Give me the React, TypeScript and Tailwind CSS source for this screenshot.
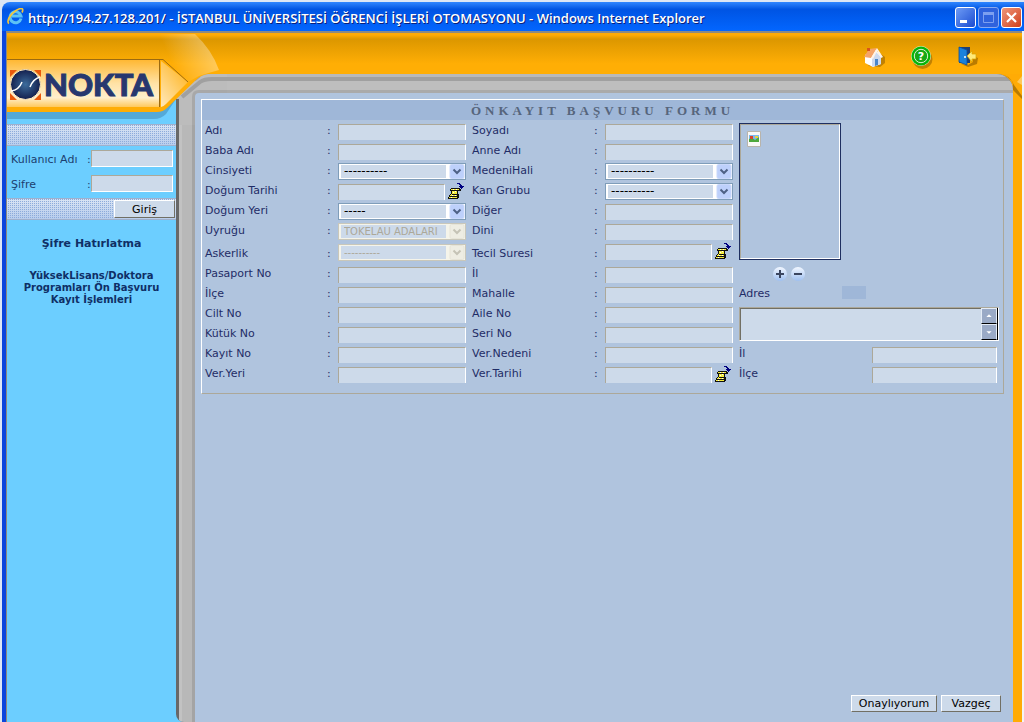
import React, { useId } from "react";

type RowKind = "text" | "select" | "date";

interface Row {
  label: string;
  kind?: RowKind;
  value?: string;
  disabled?: boolean;
  tall?: boolean;
}

const leftRows: Row[] = [
  { label: "Adı" },
  { label: "Baba Adı" },
  { label: "Cinsiyeti", kind: "select", value: "----------" },
  { label: "Doğum Tarihi", kind: "date" },
  { label: "Doğum Yeri", kind: "select", value: "-----" },
  { label: "Uyruğu", kind: "select", value: "TOKELAU ADALARI", disabled: true },
  { label: "Askerlik", kind: "select", value: "----------", disabled: true, tall: true },
  { label: "Pasaport No" },
  { label: "İlçe" },
  { label: "Cilt No" },
  { label: "Kütük No" },
  { label: "Kayıt No" },
  { label: "Ver.Yeri" },
];

const middleRows: Row[] = [
  { label: "Soyadı" },
  { label: "Anne Adı" },
  { label: "MedeniHali", kind: "select", value: "----------" },
  { label: "Kan Grubu", kind: "select", value: "----------" },
  { label: "Diğer" },
  { label: "Dini" },
  { label: "Tecil Suresi", kind: "date", tall: true },
  { label: "İl" },
  { label: "Mahalle" },
  { label: "Aile No" },
  { label: "Seri No" },
  { label: "Ver.Nedeni" },
  { label: "Ver.Tarihi", kind: "date" },
];

const inputClass =
  "block h-4 w-full min-w-0 border-t border-l border-r border-t-[#aca899] border-l-[#aca899] border-r-white bg-[#cddaea] px-1 text-[11px] text-[#1c2f5c] outline-none";
const buttonClass =
  "border border-t-white border-l-white border-r-[#716f64] border-b-[#716f64] bg-[#cddaea] text-center text-[11px] leading-[15px] text-black";

function ScrollIcon() {
  return (
    <svg width="17" height="17" viewBox="0 0 17 17" shapeRendering="crispEdges" aria-hidden="true">
      <path d="M3 5h9v1h1v2h-3v3h1v4h-1v1H0v-2h1v-2h1v-1h1V8H2V6h1z" fill="#111" />
      <path d="M3 6h8v1H3zM4 8h5v3H4v1H3v-1h1zM2 12h7v1H2zM1 14h8v1H1z" fill="#f6ee3c" />
      <path d="M5 6h1v1H5zM8 6h1v1H8zM5 9h1v1H5zM7 8h1v1H7zM4 12h1v1H4zM7 12h1v1H7zM3 14h1v1H3z" fill="#fff" />
      <path d="M9 0h3v1h1v1h1v1h2v1h-1v1h-1v1h-1V5h-1V4h-1V3h1V2h-1V1H9z" fill="#000080" />
    </svg>
  );
}

function DateField({ id }: { id: string }) {
  return (
    <div className="flex w-full items-end">
      <input id={id} className={inputClass} />
      <button type="button" aria-label="Tarih seç" className="-mt-1 ml-[3px] mr-px h-[17px] w-[17px] shrink-0">
        <ScrollIcon />
      </button>
    </div>
  );
}

function SelectField({ id, value, disabled }: { id: string; value: string; disabled?: boolean }) {
  return (
    <div
      className={`relative h-[17px] w-full border p-px ${
        disabled ? "border-[#c9c7ba] bg-[#f5f4ea]" : "border-[#7f9db9] bg-white"
      }`}
    >
      <select
        id={id}
        disabled={disabled}
        className={`block h-[13px] w-full appearance-none border-l border-r-[18px] bg-[#cddaea] pl-[3px] leading-[13px] opacity-100 outline-none ${
          disabled ? "border-[#f5f4ea] text-[10px] text-[#aca899]" : "border-white text-[12px] text-black"
        }`}
      >
        <option>{value}</option>
      </select>
      <svg
        className="pointer-events-none absolute top-0 right-0"
        width="16"
        height="15"
        viewBox="0 0 16 15"
        aria-hidden="true"
      >
        <rect x="1" y="0.5" width="14" height="14" rx="1.5" fill={disabled ? "#eeede3" : "#bdd0fb"} stroke={disabled ? "#e6e4d8" : "#c9d8fb"} />
        <path d="M4.500 5.500l3.500 3.500 3.500-3.500" fill="none" stroke={disabled ? "#c5c3b6" : "#4d6185"} strokeWidth="2" />
      </svg>
    </div>
  );
}

function FieldRow({ row }: { row: Row }) {
  const id = useId();
  return (
    <div className={`flex ${row.tall ? "h-[23px]" : "h-5"}`}>
      <label htmlFor={id} className={`w-[122px] shrink-0 ${row.tall ? "leading-[27px]" : "leading-[22px]"}`}>
        {row.label}
      </label>
      <span className={`w-[11px] shrink-0 ${row.tall ? "leading-[27px]" : "leading-[22px]"}`}>:</span>
      <div className={`flex-1 ${row.tall ? "pt-1" : "self-end"}`}>
        {row.kind === "select" ? (
          <SelectField id={id} value={row.value ?? ""} disabled={row.disabled} />
        ) : row.kind === "date" ? (
          <DateField id={id} />
        ) : (
          <input id={id} className={inputClass} />
        )}
      </div>
    </div>
  );
}

function WindowTitle() {
  return (
    <header className="flex h-[29px] shrink-0 items-center rounded-tl-lg bg-linear-to-b from-[#2f86ff] via-[#0054e3] via-25% to-[#0366ff] pr-[2px] pl-[5px] text-white">
      <svg width="17" height="17" viewBox="0 0 17 17" aria-hidden="true">
        <path d="M14 10.500A5.500 5.500 0 1 1 14 8H5" fill="none" stroke="#5cc3f5" strokeWidth="3" />
        <path d="M2 15.500C-1 14 3 6 9 2.500s8-2 6 2" fill="none" stroke="#f3c63b" strokeWidth="1.700" />
      </svg>
      <h1 className="ml-1 flex-1 truncate pt-[2px] font-['Open_Sans','Noto_Sans',sans-serif] text-[13px] leading-5 font-semibold [text-shadow:1px_1px_0_#0b1f7a]">
        http://194.27.128.201/ - İSTANBUL ÜNİVERSİTESİ ÖĞRENCİ İŞLERİ OTOMASYONU - Windows Internet Explorer
      </h1>
      <div className="flex gap-[2px] pt-px">
        <button type="button" aria-label="Simge durumuna küçült" className="h-[21px] w-[21px] rounded-[3px] border border-white bg-linear-to-br from-[#6f9bf5] to-[#1c49d0]">
          <svg width="19" height="19" viewBox="0 0 19 19" aria-hidden="true">
            <path d="M4 12h7v3H4z" fill="#fff" />
          </svg>
        </button>
        <button type="button" disabled aria-label="Ekranı kapla" className="h-[21px] w-[21px] rounded-[3px] border border-[#8aa9ee] bg-[#2f62dd]">
          <svg width="19" height="19" viewBox="0 0 19 19" aria-hidden="true">
            <path d="M4.500 5h10v9.500h-10z" fill="none" stroke="#7c9ff0" />
            <path d="M4 4h11v3H4z" fill="#7c9ff0" />
          </svg>
        </button>
        <button type="button" aria-label="Kapat" className="h-[21px] w-[21px] rounded-[3px] border border-white bg-linear-to-br from-[#ee9578] to-[#cf3c14]">
          <svg width="19" height="19" viewBox="0 0 19 19" aria-hidden="true">
            <path d="M5 5l9 9M14 5l-9 9" stroke="#fff" strokeWidth="2.200" />
          </svg>
        </button>
      </div>
    </header>
  );
}

function BrandPlate() {
  return (
    <svg className="pointer-events-none absolute top-0 left-0" width="220" height="92" viewBox="7 33 220 92" role="img" aria-label="NOKTA">
      <defs>
        <linearGradient id="arc" x1="0" y1="0.300" x2="1" y2="0">
          <stop offset="0.200" stopColor="#fff" stopOpacity="0" />
          <stop offset="1" stopColor="#fff" stopOpacity="0.450" />
        </linearGradient>
        <linearGradient id="plate" x1="0" y1="0" x2="0" y2="1">
          <stop offset="0" stopColor="#ffb833" />
          <stop offset="0.500" stopColor="#ffe2a6" />
          <stop offset="0.800" stopColor="#ffefcc" />
          <stop offset="1" stopColor="#ffc95c" />
        </linearGradient>
        <linearGradient id="wing" x1="0" y1="1" x2="0.800" y2="0">
          <stop offset="0" stopColor="#ffe9bc" />
          <stop offset="1" stopColor="#ffb31c" />
        </linearGradient>
        <radialGradient id="globe">
          <stop offset="0" stopColor="#3c6c9c" />
          <stop offset="1" stopColor="#14204e" />
        </radialGradient>
      </defs>
      <path d="M7 74H176V99L166 114Q161 119 154 119H7z" fill="#54a9d8" />
      <path d="M176 125V98L198 79Q203 74 212 74H227V93H195V125z" fill="#bcbcbc" />
      <path d="M182 97L200 82Q204 79 212 79H227" fill="none" stroke="#a0a0a0" strokeWidth="4" />
      <path d="M193.500 125V97Q193.500 91.500 199 91.500H227" fill="none" stroke="#a8a8a8" strokeWidth="3" />
      <path d="M177.500 125V99" stroke="#686868" strokeWidth="3" />
      <path d="M7 60H163L190 68H208V74Q201 75 196 80L167 108Q163 112 157 112H7z" fill="#ffad06" />
      <path d="M150 34H195Q212 50 219 70Q208 73 199 76L188 82L163 60z" fill="url(#arc)" />
      <path d="M7 60H160V107H7z" fill="url(#plate)" />
      <path d="M161 61L188 82L166 104Q163 107 161 107z" fill="url(#wing)" />
      <path d="M7 59.500H163L188 82M159.500 60V107" fill="none" stroke="#9c6a10" />
      <path d="M10 70h7l-7 7zM41 70h-7l7 7zM10 100h7l-7-7zM41 100h-7l7-7z" fill="#e9590c" />
      <circle cx="25.500" cy="84.500" r="15" fill="url(#globe)" stroke="#ffe9bf" />
      <path d="M11 91Q19 90 22 82M40 77Q33 79 30 87" fill="none" stroke="#fff" strokeWidth="1.500" />
      <text x="44" y="96" textAnchor="start" fill="#27376f" stroke="#27376f" strokeWidth="1" fontFamily="Lato, sans-serif" fontWeight="900" fontSize="31">
        NOKTA
      </text>
    </svg>
  );
}

function CornerShade() {
  return (
    <svg className="pointer-events-none absolute top-[41px] right-0" width="24" height="26" viewBox="0 0 24 26" aria-hidden="true">
      <path d="M0 0Q12 1 16 11L24 22V25L15 16V10Q13 1 0 0z" fill="#b87a00" />
      <path d="M19 8L24 2V11z" fill="#ffc95c" />
    </svg>
  );
}

function Toolbar() {
  return (
    <nav className="flex h-[41px] items-center justify-end gap-[23px] bg-linear-to-b from-[#ffab05] from-5% via-[#dc9700] via-15% to-[#ffae05] to-75% pt-[6px] pr-[42px]">
      <a href="#anasayfa" aria-label="Ana sayfa">
        <svg width="24" height="24" viewBox="0 0 24 24">
          <path d="M6 21l12 1 5-4v-6l-4-3z" fill="#a86f00" opacity=".7" />
          <path d="M3 10v8l8 4 8-3v-8l-6-7z" fill="#fff" />
          <path d="M10 22v-9l4-6 5 5v7z" fill="#cfdaee" />
          <path d="M2 12L7 4l8-1-6 10z" fill="#f5a468" />
          <path d="M9 13l6-10 6 9-2 1-4-7-4 8z" fill="#fff4e8" />
          <path d="M13 14h3v6l-3 1z" fill="#4b86c8" />
          <path d="M5 3h3v3H5z" fill="#d8551c" />
        </svg>
      </a>
      <a href="#yardim" aria-label="Yardım">
        <svg width="24" height="24" viewBox="0 0 24 24">
          <circle cx="13.500" cy="14" r="10" fill="#a86f00" opacity=".7" />
          <circle cx="12" cy="11" r="10" fill="#d9f5cf" />
          <circle cx="12" cy="11" r="8.500" fill="#17a817" stroke="#07b507" strokeWidth="2" />
          <circle cx="12" cy="11" r="6.700" fill="none" stroke="#d9f5cf" />
          <text x="12" y="15" textAnchor="middle" fill="#fff" fontFamily="DejaVu Sans, sans-serif" fontWeight="700" fontSize="11">?</text>
        </svg>
      </a>
      <a href="#cikis" aria-label="Çıkış">
        <svg width="24" height="24" viewBox="0 0 24 24">
          <path d="M5 19l7 3 9-3 1-6-5-2v6l-5 3z" fill="#a86f00" opacity=".8" />
          <path d="M3 2h11v16H3z" fill="#1f3f74" />
          <path d="M3 2l8 3v15l-8-3z" fill="#1a82dc" stroke="#0b4f9e" strokeWidth=".8" />
          <path d="M11 11l5-5v3h4v5h-4v3z" fill="#ffe97a" stroke="#d9a400" strokeWidth=".7" />
          <circle cx="9" cy="12" r="1" fill="#fff" />
        </svg>
      </a>
    </nav>
  );
}

const dotted =
  "border-y border-[#a0b0cc] bg-[conic-gradient(#8cabdb_25%,transparent_0),linear-gradient(#d9e4f4,#b8cdec)] bg-size-[2px_2px,100%_100%]";
const loginInputClass =
  "h-[17px] min-w-0 flex-1 border border-t-[#aca899] border-l-[#aca899] border-r-white border-b-white bg-[#cddaea] px-1 outline-none";

function Sidebar() {
  return (
    <aside className="w-[169px] shrink-0 bg-[#6cceff] pt-[50px] text-[11px] text-[#1c3f70]">
      <form>
        <div className={`h-[22px] ${dotted}`} />
        <div className="flex flex-col gap-2 py-1 pr-[3px] pl-1">
          <div className="flex h-[17px]">
            <label htmlFor="kullanici" className="w-[76px] leading-[19px]">Kullanıcı Adı</label>
            <span className="w-1 leading-[19px]">:</span>
            <input id="kullanici" className={loginInputClass} />
          </div>
          <div className="flex h-[17px]">
            <label htmlFor="sifre" className="w-[76px] leading-[19px]">Şifre</label>
            <span className="w-1 leading-[19px]">:</span>
            <input id="sifre" type="password" className={loginInputClass} />
          </div>
        </div>
        <div className={`mt-[2px] flex h-[22px] items-center justify-end pr-px ${dotted}`}>
          <button type="button" className={`h-[18px] w-[61px] ${buttonClass}`}>Giriş</button>
        </div>
      </form>
      <nav className="flex flex-col items-center gap-[18px] pt-4 text-center font-bold text-[#0f2f66]">
        <a href="#sifre-hatirlatma" className="leading-4">Şifre Hatırlatma</a>
        <a href="#on-basvuru" className="text-[10px] leading-3">
          YüksekLisans/Doktora
          <br />
          Programları Ön Başvuru
          <br />
          Kayıt İşlemleri
        </a>
      </nav>
    </aside>
  );
}

function PhotoAndAddress() {
  return (
    <div className="flex min-w-0 flex-1 flex-col">
      <div className="mt-[3px] h-[137px] w-[102px] border border-[#1f2f60]">
        <div className="h-full border border-t-[#aca899] border-l-[#aca899] border-r-white border-b-white pt-[6px] pl-[6px]">
          <svg width="14" height="16" viewBox="0 0 14 16" role="img" aria-label="Fotoğraf">
            <path d="M.5.500h13v15H.5z" fill="#f8f8f6" stroke="#b8b4ac" />
            <path d="M2 4h10v7H2z" fill="#7db8ee" />
            <path d="M2 11V8l3-1 3 2 4-3v5z" fill="#4da83c" />
            <path d="M3 5h3v3H3z" fill="#d8452c" />
            <path d="M8 5h3v2H8z" fill="#ecd43c" />
          </svg>
        </div>
      </div>
      <div className="flex h-[23px] items-center gap-1 pt-1 pl-[34px]">
        {["Ekle", "Sil"].map((name) => (
          <button key={name} type="button" aria-label={name} className="h-[14px] w-[14px] rounded-full bg-linear-to-b from-[#f2f7ff] to-[#9fc0f0]">
            <svg width="14" height="14" viewBox="0 0 14 14">
              <path d={name === "Ekle" ? "M3 7h8M7 3v8" : "M3 7h8"} stroke="#3b4660" strokeWidth="2" />
            </svg>
          </button>
        ))}
      </div>
      <div className="flex h-5">
        <label htmlFor="adres" className="w-[103px] leading-[22px]">Adres</label>
        <span className="mt-[3px] h-[13px] w-6 bg-[#9fb7d8]" />
      </div>
      <div className="mt-1 mr-1 flex h-[34px] border border-t-[#aca899] border-l-[#aca899] border-r-white border-b-white">
        <textarea id="adres" className="min-w-0 flex-1 resize-none border-t border-l border-[#716f64] bg-[#cddaea] px-1 outline-none" />
        <div className="flex w-[17px] flex-col border-r border-black" aria-hidden="true">
          {["M5 8h6L8 5z", "M5 6h6L8 9z"].map((d) => (
            <div key={d} className="h-4 border border-b-black border-t-[#e4ecf6] border-l-[#e4ecf6] border-r-[#e4ecf6] bg-[#9aaac6]">
              <svg width="14" height="14" viewBox="0 0 16 14">
                <path d={d} fill="#fff" />
              </svg>
            </div>
          ))}
        </div>
      </div>
      <div className="mt-[2px] flex h-5 pr-[6px]">
        <label htmlFor="adres-il" className="w-[133px] leading-[22px]">İl</label>
        <div className="flex-1 self-end">
          <input id="adres-il" className={inputClass} />
        </div>
      </div>
      <div className="flex h-5 pr-[6px]">
        <label htmlFor="adres-ilce" className="w-[133px] leading-[22px]">İlçe</label>
        <div className="flex-1 self-end">
          <input id="adres-ilce" className={inputClass} />
        </div>
      </div>
    </div>
  );
}

export default function App() {
  return (
    <div className="flex min-h-screen bg-[#dce6f4] font-['DejaVu_Sans',Verdana,sans-serif] text-[11px]">
      <div className="w-[2px] shrink-0" />
      <div className="flex min-w-0 flex-1 flex-col pt-[2px]">
        <WindowTitle />
        <div className="flex flex-1 border-r-2 border-l-4 border-r-[#f4f4f4] border-l-[#0b45dd]">
          <div className="relative flex min-w-0 flex-1 flex-col border-t-2 border-l border-[#8d8a80]">
            <Toolbar />
            <div className="flex flex-1">
              <Sidebar />
              <div className="flex min-w-0 flex-1 bg-linear-to-r from-[#6cceff] from-50% to-[#ffab05] to-50%">
                <div className="flex min-w-0 flex-1 flex-col overflow-hidden rounded-tr-2xl rounded-bl-lg bg-[#686868]">
                  <div className="flex h-[19px] flex-col">
                    <div className="h-[3px] bg-[#b9b9b9]" />
                    <div className="h-1 bg-[#a0a0a0]" />
                    <div className="h-[9px] bg-[#bebebe]" />
                    <div className="h-[3px] bg-[#aaaaaa]" />
                  </div>
                  <div className="flex flex-1 pl-[3px]">
                    <div className="w-[3px] bg-[#c2c2c2]" />
                    <div className="w-[10px] bg-[#b8b8b8]" />
                    <main className="flex min-w-0 flex-1 flex-col border-l-[3px] border-[#a4a4a4] bg-[#b0c4de] pt-[6px] pb-[10px] text-[#1f2c66]">
                      <form className="flex flex-1 flex-col">
                        <section className="mr-[9px] ml-[6px] border border-t-white border-l-white border-r-[#aca899] border-b-[#aca899]">
                          <h2 className="h-5 bg-[#9fb7d8] text-center font-['Liberation_Serif',serif] text-[13px] leading-[22px] font-bold tracking-[4px] text-[#56657c]">
                            ÖNKAYIT BAŞVURU FORMU
                          </h2>
                          <div className="flex gap-[6px] pb-[10px] pl-[3px]">
                            <div className="w-[261px] shrink-0">
                              {leftRows.map((row) => (
                                <FieldRow key={row.label} row={row} />
                              ))}
                            </div>
                            <div className="w-[261px] shrink-0">
                              {middleRows.map((row) => (
                                <FieldRow key={row.label} row={row} />
                              ))}
                            </div>
                            <PhotoAndAddress />
                          </div>
                        </section>
                        <div className="mt-auto flex justify-end gap-1 pr-3">
                          <button type="button" className={`h-[17px] w-[86px] ${buttonClass}`}>Onaylıyorum</button>
                          <button type="button" className={`h-[17px] w-[60px] ${buttonClass}`}>Vazgeç</button>
                        </div>
                      </form>
                    </main>
                  </div>
                </div>
                <div className="w-[9px] shrink-0" />
              </div>
            </div>
            <BrandPlate />
            <CornerShade />
          </div>
        </div>
      </div>
    </div>
  );
}
